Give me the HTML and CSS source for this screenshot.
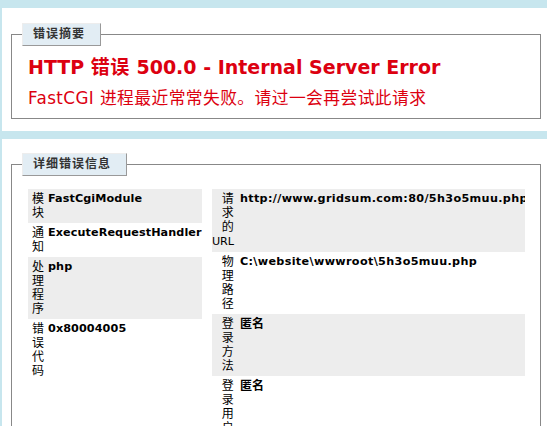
FILE: index.html
```html
<!DOCTYPE html>
<html lang="zh-CN">
<head>
<meta charset="utf-8">
<title>IIS 7.5 详细错误 - 500.0 - Internal Server Error</title>
<link rel="stylesheet" href="styles.css">
</head>
<body>
<div class="box summary">
  <fieldset class="set set-summary">
    <legend class="tag">错误摘要</legend>
    <h2 class="err-title">HTTP <span class="zh-big">错误</span> 500.0 - Internal Server Error</h2>
    <h3 class="err-sub">FastCGI 进程最近常常失败。请过一会再尝试此请求</h3>
  </fieldset>
</div>
<div class="box details">
  <fieldset class="set set-details">
    <legend class="tag">详细错误信息</legend>
    <div class="cols">
      <div class="col col-left">
        <table class="info info-left">
          <tr class="alt"><th>模块</th><td>FastCgiModule</td></tr>
          <tr><th>通知</th><td>ExecuteRequestHandler</td></tr>
          <tr class="alt"><th>处理程序</th><td>php</td></tr>
          <tr><th>错误代码</th><td>0x80004005</td></tr>
        </table>
      </div>
      <div class="col col-right">
        <table class="info info-right">
          <tr class="alt"><th>请求的<span class="latin">URL</span></th><td>http://www.gridsum.com:80/5h3o5muu.php</td></tr>
          <tr><th>物理路径</th><td>C:\website\wwwroot\5h3o5muu.php</td></tr>
          <tr class="alt"><th>登录方法</th><td><span class="zh">匿名</span></td></tr>
          <tr><th>登录用户</th><td><span class="zh">匿名</span></td></tr>
        </table>
      </div>
    </div>
  </fieldset>
</div>
</body>
</html>
```

FILE: styles.css
```css
html {
  overflow: hidden;
  background: #c7e6ee;
}

body {
  margin: 0;
  padding: 8px 0 0 2px;
  font-family: "DejaVu Sans", "Noto Sans CJK SC", sans-serif;
  font-size: 11.2px;
  color: #000;
  background: #c7e6ee;
}

.box {
  background: #fff;
  padding: 15px 6px 12px 9px;
}

.details {
  margin-top: 8px;
  padding-top: 14px;
  min-height: 400px;
}

.set {
  margin: 0;
  border: 1px solid #888;
  padding: 0 15px 10px 16px;
  min-width: 0;
}

.set-details {
  min-height: 380px;
}

.tag {
  margin: 0 0 0 -6px;
  padding: 4px 15px 4px 10px;
  font-size: 12px;
  line-height: 13px;
  font-weight: bold;
  letter-spacing: 1px;
  color: #333;
  background: #e2edf4;
  border-top: 1px solid #ededed;
  border-left: 1px solid #ededed;
  border-right: 1px solid #999;
  border-bottom: 1px solid #999;
}

.err-title {
  margin: 10px 0 0 0;
  font-size: 19px;
  line-height: 22px;
  font-weight: bold;
  color: #dc0010;
  white-space: nowrap;
}

.zh-big {
  letter-spacing: 0.5px;
}

.err-sub {
  margin: 10px 0 0 0;
  font-size: 16.8px;
  line-height: 20px;
  font-weight: normal;
  letter-spacing: 0.4px;
  color: #dc0010;
  white-space: nowrap;
}

.cols {
  display: grid;
  grid-template-columns: 35% 63%;
  column-gap: 2%;
  margin-top: 13px;
}

.col-right {
  overflow: hidden;
}

.info {
  width: 100%;
  table-layout: fixed;
  border-collapse: collapse;
  border-spacing: 0;
}

.info th,
.info td {
  vertical-align: top;
  padding: 3px 0;
  line-height: 14px;
  text-align: left;
}

.info th {
  box-sizing: border-box;
  font-size: 12px;
  font-weight: normal;
  text-align: right;
}

.info-left th {
  width: 20px;
  padding-right: 4px;
}

.info-right th {
  width: 28px;
  padding-right: 6px;
}

.info td {
  font-weight: bold;
  white-space: nowrap;
}

.info-left td {
  letter-spacing: 0.1px;
}

.info-right td {
  letter-spacing: 0.35px;
}

.info tr.alt th,
.info tr.alt td {
  background: #ededed;
}

.latin {
  font-size: 11.2px;
  letter-spacing: 0;
}

.zh {
  font-size: 12px;
  letter-spacing: 0;
}
```
